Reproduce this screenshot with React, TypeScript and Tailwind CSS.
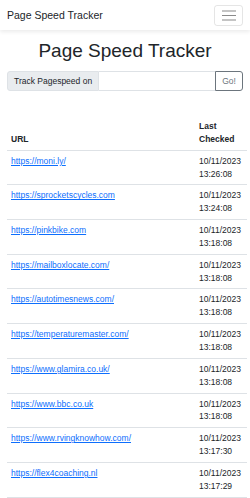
const rows = [
  { url: "https://moni.ly/", date: "10/11/2023", time: "13:26:08" },
  { url: "https://sprocketscycles.com", date: "10/11/2023", time: "13:24:08" },
  { url: "https://pinkbike.com", date: "10/11/2023", time: "13:18:08" },
  { url: "https://mailboxlocate.com/", date: "10/11/2023", time: "13:18:08" },
  { url: "https://autotimesnews.com/", date: "10/11/2023", time: "13:18:08" },
  { url: "https://temperaturemaster.com/", date: "10/11/2023", time: "13:18:08" },
  { url: "https://www.glamira.co.uk/", date: "10/11/2023", time: "13:18:08" },
  { url: "https://www.bbc.co.uk", date: "10/11/2023", time: "13:18:08" },
  { url: "https://www.rvingknowhow.com/", date: "10/11/2023", time: "13:17:30" },
  { url: "https://flex4coaching.nl", date: "10/11/2023", time: "13:17:29" },
];

export default function App() {
  return (
    <div className="min-h-screen w-[250px] overflow-hidden bg-white font-['Liberation_Sans',Arial,sans-serif] text-[8.5px] leading-[12.85px] text-[#212529]">
      <nav className="flex h-[30px] items-center justify-between bg-white px-[7px] shadow-[0_2px_4px_rgba(0,0,0,0.08)]">
        <span className="text-[10.5px] leading-[14px]">Page Speed Tracker</span>
        <button className="flex h-[21px] w-[29px] items-center justify-center rounded-[3px] border border-[rgba(0,0,0,0.1)]">
          <svg width="14" height="11" viewBox="0 0 14 11">
            <path d="M0 1h14M0 5.5h14M0 10h14" stroke="#8a8a8a" strokeWidth="1.1" />
          </svg>
        </button>
      </nav>

      <div className="px-[7px]">
        <h1 className="mt-[9px] text-center text-[19px] leading-[23px] font-medium">Page Speed Tracker</h1>

        <div className="mt-[9px] flex h-[20px] w-[236px]">
          <span className="flex items-center rounded-l-[3px] border border-[#dee2e6] bg-[#e9ecef] px-[6px] whitespace-nowrap">
            Track Pagespeed on
          </span>
          <input className="min-w-0 flex-1 border-y border-[#dee2e6] bg-white outline-none" />
          <button className="flex w-[28px] items-center justify-center rounded-r-[3px] border border-[#6c757d] text-[#6c757d]">
            Go!
          </button>
        </div>

        <table className="mt-[25px] w-[240px] table-fixed border-collapse">
          <thead>
            <tr className="border-b border-[#dee2e6]">
              <th className="w-[188px] p-[4px] text-left align-bottom font-bold">URL</th>
              <th className="p-[4px] text-left align-bottom font-bold">Last Checked</th>
            </tr>
          </thead>
          <tbody>
            {rows.map((r) => (
              <tr key={r.url} className="border-b border-[#dee2e6]">
                <td className="p-[4px] align-top">
                  <a href="#" className="text-[#0d6efd] underline">
                    {r.url}
                  </a>
                </td>
                <td className="p-[4px] align-top whitespace-nowrap">
                  {r.date}
                  <br />
                  {r.time}
                </td>
              </tr>
            ))}
          </tbody>
        </table>
      </div>
    </div>
  );
}
